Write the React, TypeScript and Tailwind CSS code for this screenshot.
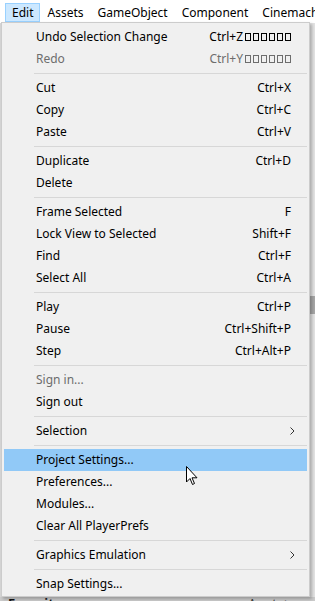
import React from "react";

type Item =
  | { sep: true }
  | { label: string; shortcut?: string; tofu?: boolean; disabled?: boolean; sub?: boolean; active?: boolean };

const items: Item[] = [
  { label: "Undo Selection Change", shortcut: "Ctrl+Z", tofu: true },
  { label: "Redo", shortcut: "Ctrl+Y", tofu: true, disabled: true },
  { sep: true },
  { label: "Cut", shortcut: "Ctrl+X" },
  { label: "Copy", shortcut: "Ctrl+C" },
  { label: "Paste", shortcut: "Ctrl+V" },
  { sep: true },
  { label: "Duplicate", shortcut: "Ctrl+D" },
  { label: "Delete" },
  { sep: true },
  { label: "Frame Selected", shortcut: "F" },
  { label: "Lock View to Selected", shortcut: "Shift+F" },
  { label: "Find", shortcut: "Ctrl+F" },
  { label: "Select All", shortcut: "Ctrl+A" },
  { sep: true },
  { label: "Play", shortcut: "Ctrl+P" },
  { label: "Pause", shortcut: "Ctrl+Shift+P" },
  { label: "Step", shortcut: "Ctrl+Alt+P" },
  { sep: true },
  { label: "Sign in...", disabled: true },
  { label: "Sign out" },
  { sep: true },
  { label: "Selection", sub: true },
  { sep: true },
  { label: "Project Settings...", active: true },
  { label: "Preferences..." },
  { label: "Modules..." },
  { label: "Clear All PlayerPrefs" },
  { sep: true },
  { label: "Graphics Emulation", sub: true },
  { sep: true },
  { label: "Snap Settings..." },
];

function Tofu() {
  return <span className="inline-block w-[6px] h-[8px] border border-current ml-[2px] align-[-1px]" />;
}

function Chevron() {
  return (
    <svg width="5" height="8" viewBox="0 0 5 8" className="absolute right-[12px] top-[7px]">
      <path d="M0.5 0.5 L4 4 L0.5 7.5" fill="none" stroke="#333" strokeWidth="1" />
    </svg>
  );
}

export default function App() {
  const menus = ["Edit", "Assets", "GameObject", "Component", "Cinemachine"];
  return (
    <div className="relative w-[315px] h-[601px] overflow-hidden bg-[#d6d6d6] text-[12px] text-black font-['Noto_Sans','Liberation_Sans',sans-serif]">
      {/* menu bar */}
      <div className="h-[23px] bg-white flex items-center whitespace-nowrap">
        {menus.map((m, i) => (
          <div
            key={m}
            className={
              i === 0
                ? "ml-[5px] h-[19px] mt-[2px] px-[6px] flex items-center bg-[#cce8ff] border border-[#99d1ff]"
                : "px-[7px] h-[19px] mt-[2px] flex items-center"
            }
          >
            {m}
          </div>
        ))}
      </div>

      {/* editor behind */}
      <div className="absolute right-0 top-[23px] w-[6px] h-[574px] bg-[#e3e3e3]">
        <div className="mt-[273px] h-[18px] bg-[#a6a6a6]" />
      </div>
      <div className="absolute left-0 top-[597px] w-full h-[4px] bg-[#cbcbcb] overflow-hidden flex">
        <span className="ml-[8px] leading-[12px] font-bold text-[13px] text-[#111]">Favorites</span>
        <span className="ml-auto mr-[4px] leading-[12px] text-[11px] text-[#333]">Assets &gt; pre</span>
      </div>

      {/* dropdown */}
      <div className="absolute left-[1px] top-[22px] w-[309px] bg-[#f0f0f0] border border-[#cccccc] shadow-[2px_2px_3px_rgba(0,0,0,0.25)] pt-[3px] pb-[1px] px-[2px]">
        {items.map((it, i) =>
          "sep" in it ? (
            <div key={i} className="h-[7px] flex items-center pl-[30px]">
              <div className="h-px w-full bg-[#d7d7d7]" />
            </div>
          ) : (
            <div
              key={i}
              className={
                "relative h-[22px] flex items-center justify-between pl-[32px] pr-[16px] whitespace-nowrap " +
                (it.active ? "bg-[#91c9f7] " : "") +
                (it.disabled ? "text-[#6d6d6d]" : "text-black")
              }
            >
              <span>{it.label}</span>
              {it.shortcut && (
                <span className="flex items-center">
                  {it.shortcut}
                  {it.tofu && (
                    <>
                      <Tofu />
                      <Tofu />
                      <Tofu />
                      <Tofu />
                      <Tofu />
                      <Tofu />
                    </>
                  )}
                </span>
              )}
              {it.sub && <Chevron />}
            </div>
          )
        )}
      </div>

      {/* mouse cursor */}
      <svg className="absolute left-[186px] top-[466px]" width="13" height="20" viewBox="0 0 13 20">
        <path d="M0.5 0.5 L0.5 16 L4 12.5 L6.5 18.5 L8.5 17.5 L6 11.8 L11 11.8 Z" fill="#fff" stroke="#000" strokeWidth="1" strokeLinejoin="miter" />
      </svg>
    </div>
  );
}
